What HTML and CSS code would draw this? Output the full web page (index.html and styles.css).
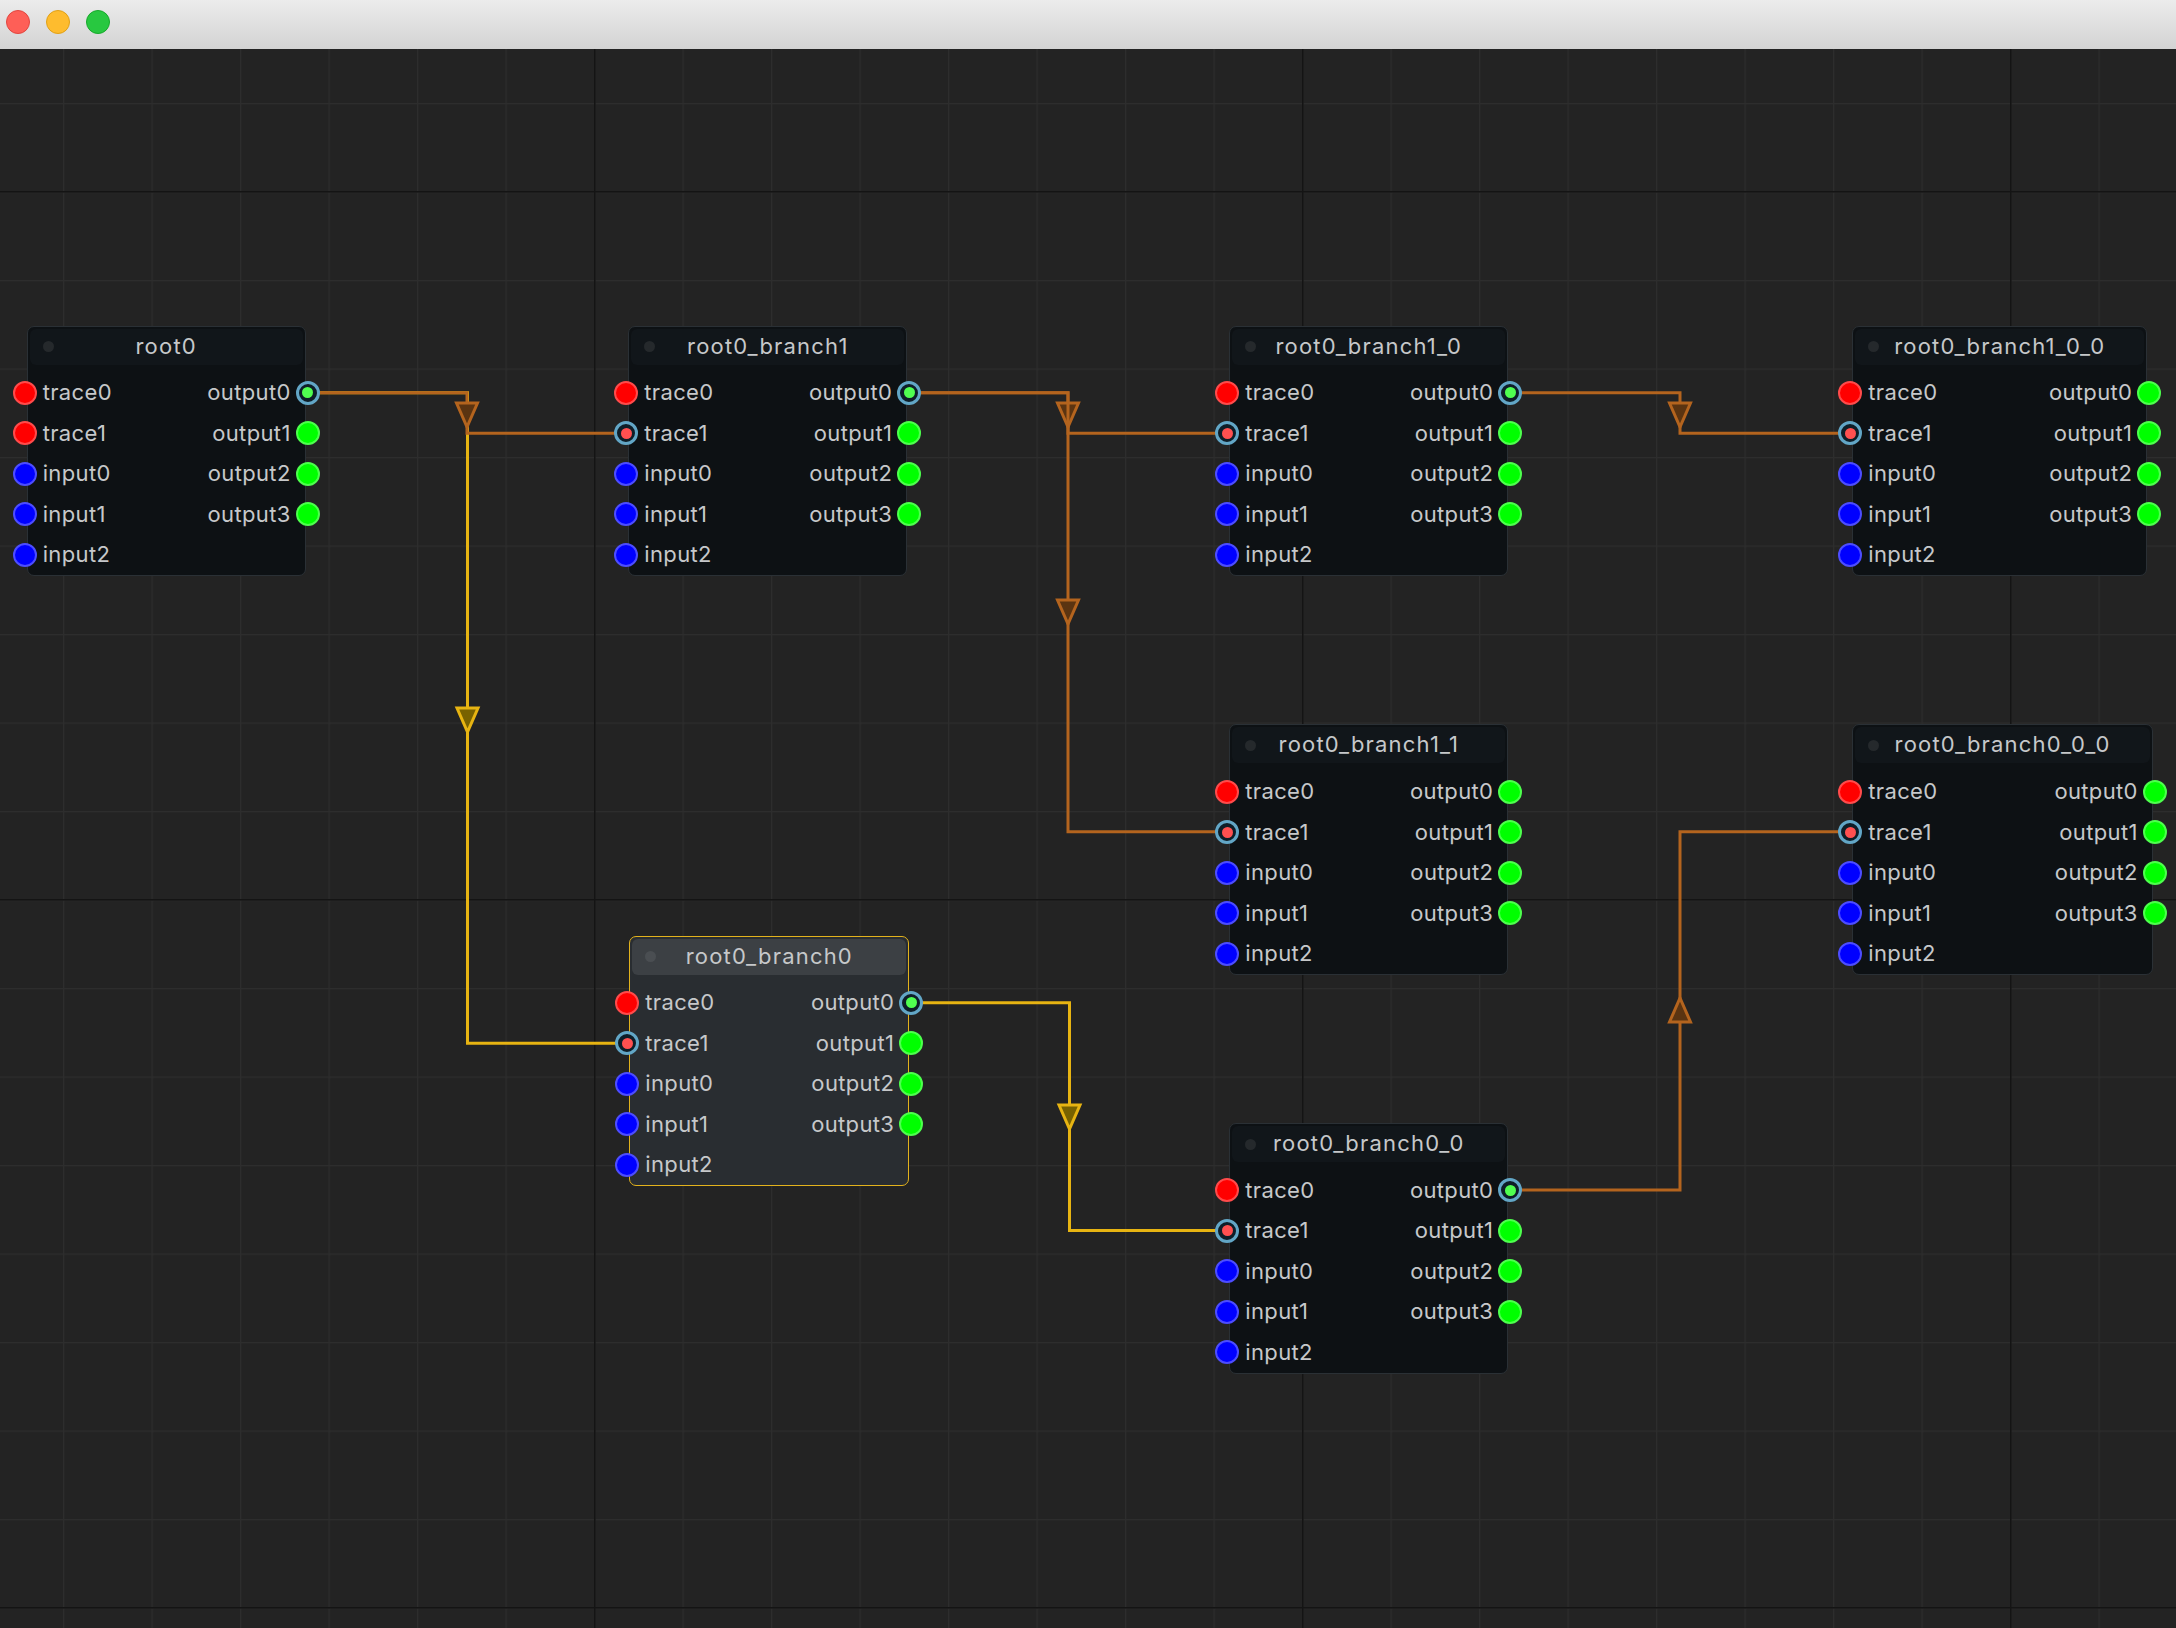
FILE: index.html
```html
<!DOCTYPE html>
<html>
<head>
<meta charset="utf-8">
<title>Node graph</title>
<link rel="stylesheet" href="styles.css">
</head>
<body>
<div class="window">
  <div class="titlebar">
    <span class="light close"></span>
    <span class="light min"></span>
    <span class="light max"></span>
  </div>
  <div class="canvas">
    <svg class="grid" width="2176" height="1579" xmlns="http://www.w3.org/2000/svg">
      <defs>
        <pattern id="minor" patternUnits="userSpaceOnUse" x="63" y="54" width="88.5" height="88.5">
          <rect x="0" y="0" width="1.2" height="88.5" fill="#2d2d2d"/>
          <rect x="0" y="0" width="88.5" height="1.2" fill="#2d2d2d"/>
        </pattern>
        <pattern id="major" patternUnits="userSpaceOnUse" x="594" y="142" width="708" height="708">
          <rect x="0" y="0" width="1.6" height="708" fill="#141414"/>
          <rect x="0" y="0" width="708" height="1.6" fill="#141414"/>
        </pattern>
      </defs>
      <rect width="2176" height="1579" fill="#232323"/>
      <rect width="2176" height="1579" fill="url(#minor)"/>
      <rect width="2176" height="1579" fill="url(#major)"/>
    </svg>

    <svg class="edges" width="2176" height="1579" xmlns="http://www.w3.org/2000/svg">
      <g class="edge sel">
        <path d="M307.5 343.7 H467.5 V994.2 H627.5"/>
        <polygon points="457,659 478,659 467.5,683"/>
      </g>
      <g class="edge sel">
        <path d="M910.7 953.7 H1069.5 V1181.5 H1227"/>
        <polygon points="1059,1056 1080,1056 1069.5,1080"/>
      </g>
      <g class="edge">
        <path d="M307.5 343.7 H467 V384.2 H626.5"/>
        <polygon points="456.5,354 477.5,354 467,378"/>
      </g>
      <g class="edge">
        <path d="M908.7 343.7 H1068 V384.2 H1227"/>
        <polygon points="1057.5,354 1078.5,354 1068,378"/>
      </g>
      <g class="edge">
        <path d="M908.7 343.7 H1068 V782.8 H1227"/>
        <polygon points="1057.5,551 1078.5,551 1068,575"/>
      </g>
      <g class="edge">
        <path d="M1510 343.7 H1680 V384.2 H1850"/>
        <polygon points="1669.5,354 1690.5,354 1680,378"/>
      </g>
      <g class="edge">
        <path d="M1510 1141 H1680 V782.8 H1850"/>
        <polygon points="1669.5,973 1690.5,973 1680,949"/>
      </g>
    </svg>

    <!-- root0 -->
    <div class="node" style="left:26.7px; top:276.7px">
      <div class="head"><span class="dot"></span><span class="title">root0</span><span></span></div>
      <div class="body">
        <div class="col ins">
          <div class="row"><span class="port red"></span><span class="label">trace0</span></div>
          <div class="row"><span class="port red"></span><span class="label">trace1</span></div>
          <div class="row"><span class="port blue"></span><span class="label">input0</span></div>
          <div class="row"><span class="port blue"></span><span class="label">input1</span></div>
          <div class="row"><span class="port blue"></span><span class="label">input2</span></div>
        </div>
        <div class="col outs">
          <div class="row"><span class="label">output0</span><span class="port green linked"><i></i></span></div>
          <div class="row"><span class="label">output1</span><span class="port green"></span></div>
          <div class="row"><span class="label">output2</span><span class="port green"></span></div>
          <div class="row"><span class="label">output3</span><span class="port green"></span></div>
        </div>
      </div>
    </div>

    <!-- root0_branch1 -->
    <div class="node" style="left:628.3px; top:276.7px">
      <div class="head"><span class="dot"></span><span class="title">root0_branch1</span><span></span></div>
      <div class="body">
        <div class="col ins">
          <div class="row"><span class="port red"></span><span class="label">trace0</span></div>
          <div class="row"><span class="port red linked"><i></i></span><span class="label">trace1</span></div>
          <div class="row"><span class="port blue"></span><span class="label">input0</span></div>
          <div class="row"><span class="port blue"></span><span class="label">input1</span></div>
          <div class="row"><span class="port blue"></span><span class="label">input2</span></div>
        </div>
        <div class="col outs">
          <div class="row"><span class="label">output0</span><span class="port green linked"><i></i></span></div>
          <div class="row"><span class="label">output1</span><span class="port green"></span></div>
          <div class="row"><span class="label">output2</span><span class="port green"></span></div>
          <div class="row"><span class="label">output3</span><span class="port green"></span></div>
        </div>
      </div>
    </div>

    <!-- root0_branch1_0 -->
    <div class="node" style="left:1229.3px; top:276.7px">
      <div class="head"><span class="dot"></span><span class="title">root0_branch1_0</span><span></span></div>
      <div class="body">
        <div class="col ins">
          <div class="row"><span class="port red"></span><span class="label">trace0</span></div>
          <div class="row"><span class="port red linked"><i></i></span><span class="label">trace1</span></div>
          <div class="row"><span class="port blue"></span><span class="label">input0</span></div>
          <div class="row"><span class="port blue"></span><span class="label">input1</span></div>
          <div class="row"><span class="port blue"></span><span class="label">input2</span></div>
        </div>
        <div class="col outs">
          <div class="row"><span class="label">output0</span><span class="port green linked"><i></i></span></div>
          <div class="row"><span class="label">output1</span><span class="port green"></span></div>
          <div class="row"><span class="label">output2</span><span class="port green"></span></div>
          <div class="row"><span class="label">output3</span><span class="port green"></span></div>
        </div>
      </div>
    </div>

    <!-- root0_branch1_0_0 -->
    <div class="node" style="left:1852.3px; top:276.7px; width:295px">
      <div class="head"><span class="dot"></span><span class="title">root0_branch1_0_0</span><span></span></div>
      <div class="body">
        <div class="col ins">
          <div class="row"><span class="port red"></span><span class="label">trace0</span></div>
          <div class="row"><span class="port red linked"><i></i></span><span class="label">trace1</span></div>
          <div class="row"><span class="port blue"></span><span class="label">input0</span></div>
          <div class="row"><span class="port blue"></span><span class="label">input1</span></div>
          <div class="row"><span class="port blue"></span><span class="label">input2</span></div>
        </div>
        <div class="col outs">
          <div class="row"><span class="label">output0</span><span class="port green"></span></div>
          <div class="row"><span class="label">output1</span><span class="port green"></span></div>
          <div class="row"><span class="label">output2</span><span class="port green"></span></div>
          <div class="row"><span class="label">output3</span><span class="port green"></span></div>
        </div>
      </div>
    </div>

    <!-- root0_branch1_1 -->
    <div class="node" style="left:1229.3px; top:675.3px">
      <div class="head"><span class="dot"></span><span class="title">root0_branch1_1</span><span></span></div>
      <div class="body">
        <div class="col ins">
          <div class="row"><span class="port red"></span><span class="label">trace0</span></div>
          <div class="row"><span class="port red linked"><i></i></span><span class="label">trace1</span></div>
          <div class="row"><span class="port blue"></span><span class="label">input0</span></div>
          <div class="row"><span class="port blue"></span><span class="label">input1</span></div>
          <div class="row"><span class="port blue"></span><span class="label">input2</span></div>
        </div>
        <div class="col outs">
          <div class="row"><span class="label">output0</span><span class="port green"></span></div>
          <div class="row"><span class="label">output1</span><span class="port green"></span></div>
          <div class="row"><span class="label">output2</span><span class="port green"></span></div>
          <div class="row"><span class="label">output3</span><span class="port green"></span></div>
        </div>
      </div>
    </div>

    <!-- root0_branch0_0_0 -->
    <div class="node" style="left:1852.3px; top:675.3px; width:300.5px">
      <div class="head"><span class="dot"></span><span class="title">root0_branch0_0_0</span><span></span></div>
      <div class="body">
        <div class="col ins">
          <div class="row"><span class="port red"></span><span class="label">trace0</span></div>
          <div class="row"><span class="port red linked"><i></i></span><span class="label">trace1</span></div>
          <div class="row"><span class="port blue"></span><span class="label">input0</span></div>
          <div class="row"><span class="port blue"></span><span class="label">input1</span></div>
          <div class="row"><span class="port blue"></span><span class="label">input2</span></div>
        </div>
        <div class="col outs">
          <div class="row"><span class="label">output0</span><span class="port green"></span></div>
          <div class="row"><span class="label">output1</span><span class="port green"></span></div>
          <div class="row"><span class="label">output2</span><span class="port green"></span></div>
          <div class="row"><span class="label">output3</span><span class="port green"></span></div>
        </div>
      </div>
    </div>

    <!-- root0_branch0 (selected) -->
    <div class="node selected" style="left:629.3px; top:886.7px">
      <div class="head"><span class="dot"></span><span class="title">root0_branch0</span><span></span></div>
      <div class="body">
        <div class="col ins">
          <div class="row"><span class="port red"></span><span class="label">trace0</span></div>
          <div class="row"><span class="port red linked"><i></i></span><span class="label">trace1</span></div>
          <div class="row"><span class="port blue"></span><span class="label">input0</span></div>
          <div class="row"><span class="port blue"></span><span class="label">input1</span></div>
          <div class="row"><span class="port blue"></span><span class="label">input2</span></div>
        </div>
        <div class="col outs">
          <div class="row"><span class="label">output0</span><span class="port green linked"><i></i></span></div>
          <div class="row"><span class="label">output1</span><span class="port green"></span></div>
          <div class="row"><span class="label">output2</span><span class="port green"></span></div>
          <div class="row"><span class="label">output3</span><span class="port green"></span></div>
        </div>
      </div>
    </div>

    <!-- root0_branch0_0 -->
    <div class="node" style="left:1229.3px; top:1074px">
      <div class="head"><span class="dot"></span><span class="title">root0_branch0_0</span><span></span></div>
      <div class="body">
        <div class="col ins">
          <div class="row"><span class="port red"></span><span class="label">trace0</span></div>
          <div class="row"><span class="port red linked"><i></i></span><span class="label">trace1</span></div>
          <div class="row"><span class="port blue"></span><span class="label">input0</span></div>
          <div class="row"><span class="port blue"></span><span class="label">input1</span></div>
          <div class="row"><span class="port blue"></span><span class="label">input2</span></div>
        </div>
        <div class="col outs">
          <div class="row"><span class="label">output0</span><span class="port green linked"><i></i></span></div>
          <div class="row"><span class="label">output1</span><span class="port green"></span></div>
          <div class="row"><span class="label">output2</span><span class="port green"></span></div>
          <div class="row"><span class="label">output3</span><span class="port green"></span></div>
        </div>
      </div>
    </div>
  </div>
</div>
</body>
</html>
```

FILE: styles.css
```css
html, body {
  margin: 0;
  padding: 0;
  width: 2176px;
  height: 1628px;
  overflow: hidden;
  background: #232323;
  font-family: Inter, "Noto Sans", "DejaVu Sans", sans-serif;
}

.window {
  display: flex;
  flex-direction: column;
  width: 2176px;
  height: 1628px;
}

.titlebar {
  flex: 0 0 auto;
  height: 47px;
  box-sizing: content-box;
  border-bottom: 2px solid #a7a7a7;
  background: linear-gradient(#ececec, #d3d3d3);
  display: flex;
  align-items: center;
  gap: 16px;
  padding-left: 6px;
  padding-bottom: 3px;
  margin-bottom: -3px;
}

.light {
  width: 24px;
  height: 24px;
  border-radius: 50%;
  box-sizing: border-box;
  border: 1px solid;
  margin-top: -3px;
}
.light.close { background: #fe5f57; border-color: #e2463f; }
.light.min { background: #febc2e; border-color: #e1a116; }
.light.max { background: #28c840; border-color: #17a92b; }

.canvas {
  position: relative;
  flex: 1 1 auto;
  overflow: hidden;
}

.grid, .edges {
  position: absolute;
  left: 0;
  top: 0;
}

.edge path {
  fill: none;
  stroke: #b4641e;
  stroke-width: 3;
}
.edge polygon {
  fill: #5b3411;
  stroke: #b4641e;
  stroke-width: 3;
  stroke-linejoin: miter;
}
.edge.sel path {
  stroke: #e7b412;
}
.edge.sel polygon {
  fill: #786200;
  stroke: #e7b412;
}

.node {
  position: absolute;
  box-sizing: border-box;
  min-width: 279px;
  padding: 2px 2px 0;
  background: #0d1114;
  border: 1px solid #2a3035;
  border-radius: 7px;
  color: #c6c8ca;
  display: flex;
  flex-direction: column;
}

.node.selected {
  background: #292d31;
  border: 1.5px solid #e2b21c;
  min-width: 280px;
}

.head {
  flex: none;
  height: 36px;
  border-radius: 6px;
  background: #11161a;
  display: grid;
  grid-template-columns: minmax(35px, 1fr) auto minmax(35px, 1fr);
  align-items: center;
}
.node.selected .head {
  background: #3c4044;
}

.dot {
  width: 11px;
  height: 11px;
  border-radius: 50%;
  background: #25292c;
  margin-left: 13px;
}
.node.selected .dot {
  background: #4a4e52;
}

.title {
  font-size: 22px;
  line-height: 36px;
  letter-spacing: 1.2px;
  white-space: nowrap;
  color: #c6c8ca;
  margin-top: -2px;
}

.body {
  flex: none;
  margin-top: 8px;
  display: flex;
  justify-content: space-between;
}

.col {
  display: flex;
  flex-direction: column;
}

.row {
  flex: none;
  height: 40.5px;
  display: flex;
  align-items: center;
}

.ins .row {
  margin-left: -17px;
}
.ins .port {
  margin-right: 6px;
}

.outs .row {
  justify-content: flex-end;
  margin-right: -17px;
}
.outs .port {
  margin-left: 5px;
}

.label {
  font-size: 22px;
  line-height: 26px;
  letter-spacing: 0.35px;
  white-space: nowrap;
  color: #c6c8ca;
  margin-top: -1px;
}

.port {
  flex: 0 0 auto;
  width: 24px;
  height: 24px;
  border-radius: 50%;
  box-sizing: border-box;
  border: 2px solid;
  display: flex;
  align-items: center;
  justify-content: center;
}
.port.red { background: #ff0000; border-color: #ff4b4b; }
.port.blue { background: #0000ff; border-color: #4d4dff; }
.port.green { background: #00ff00; border-color: #4dff4d; }

.port.linked {
  background: #0e1e28;
  border: 3px solid #62a6c6;
}
.port.linked i {
  width: 11px;
  height: 11px;
  border-radius: 50%;
}
.port.red.linked i { background: #ff5050; }
.port.green.linked i { background: #50ff50; }
```
